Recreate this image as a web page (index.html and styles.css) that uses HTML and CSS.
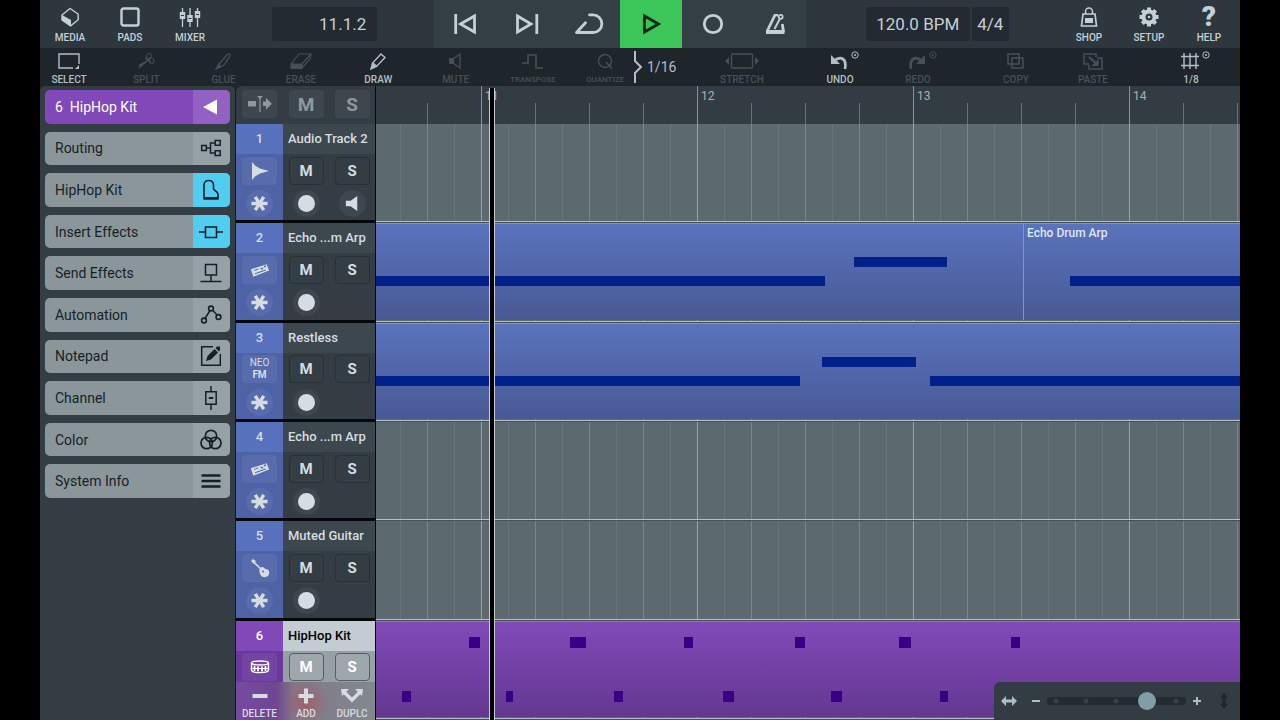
FILE: index.html
```html
<!DOCTYPE html>
<html lang="en">
<head>
    <meta charset="UTF-8">
    <meta name="viewport" content="width=device-width, initial-scale=1.0">
    <title>HipHop Kit - Arranger</title>
    <link rel="stylesheet" href="styles.css">
</head>
<body>
    <!-- Shared icons -->
    <svg class="defs" aria-hidden="true">
        <symbol id="star" viewBox="0 0 20 20"><path d="M1.500 10h17M5.500 3l9 14M14.500 3l-9 14" stroke="currentColor" stroke-width="3.600"/></symbol>
        <symbol id="device" viewBox="0 0 24 20"><path d="M1 9L20 3l3 7.500L4 18z" fill="currentColor"/><path d="M5 10.500l5-1.800M6 14.500l13-4.500" fill="none" stroke="#5369af" stroke-width="1.200"/><path d="M12 8l3 2 1-3z" fill="#5369af"/><path d="M17 6l2-.6" stroke="#5369af" stroke-width="2"/></symbol>
        <symbol id="target" viewBox="0 0 8 8"><circle cx="4" cy="4" r="3.200" fill="none" stroke="currentColor"/><circle cx="4" cy="4" r="1" fill="currentColor"/></symbol>
    </svg>

    <div class="app">
        <header class="topbar">
            <nav class="top-group left">
                <button class="top-btn"><svg viewBox="0 0 20 20"><path d="M10 1.500L18.200 7v5.800L10.500 19 2 13V8z" fill="none" stroke="currentColor" stroke-width="1.400" stroke-linejoin="round"/><path d="M2 8l9 5v6L2 13.500z" fill="currentColor"/></svg>MEDIA</button>
                <button class="top-btn"><svg viewBox="0 0 20 20"><rect x="1.500" y="1.500" width="17" height="17" rx="2" fill="none" stroke="currentColor" stroke-width="2.400"/></svg>PADS</button>
                <button class="top-btn"><svg viewBox="0 0 22 20"><path d="M3.500 1v19M11 1v19M18.500 1v19" stroke="currentColor" stroke-width="1.300"/><path d="M.8 5h5.400v7H.8zM8.300 8h5.400v7H8.300zM15.800 4h5.400v7h-5.400z" fill="currentColor"/><path d="M2 8.500h3M9.500 11.500h3M17 7.500h3" stroke="#2e363d"/></svg>MIXER</button>
            </nav>
            <output class="display position">11.1.2</output>
            <div class="transport">
                <button aria-label="Previous"><svg viewBox="0 0 30 30"><path d="M5.700 5v20M24.500 7v16L10.500 15z" fill="none" stroke="currentColor" stroke-width="2.800"/></svg></button>
                <button aria-label="Next"><svg viewBox="0 0 30 30"><path d="M24.800 5v20M5.500 7v16L19 15z" fill="none" stroke="currentColor" stroke-width="2.800"/></svg></button>
                <button aria-label="Loop"><svg viewBox="0 0 30 30"><path d="M11.500 13.700L2.500 23.500H19a8.800 8.800 0 0 0 0-17.700h-3.500" fill="none" stroke="currentColor" stroke-width="2.800" stroke-linecap="round" stroke-linejoin="round"/></svg></button>
                <button class="play" aria-label="Play"><svg viewBox="0 0 30 30"><path d="M8.500 7v16l14-8z" fill="none" stroke="currentColor" stroke-width="2.800"/></svg></button>
                <button aria-label="Record"><svg viewBox="0 0 30 30"><circle cx="15" cy="15" r="8.700" fill="none" stroke="currentColor" stroke-width="2.800"/></svg></button>
                <button aria-label="Metronome"><svg viewBox="0 0 30 30"><path d="M15 6L7 22.500M22.300 15L23.500 23" fill="none" stroke="currentColor" stroke-width="2.800"/><path d="M14 6.200h4" stroke="currentColor" stroke-width="2.400"/><path d="M6 23h18.500" stroke="currentColor" stroke-width="4"/><path d="M14.500 20l5.500-10.500" stroke="currentColor" stroke-width="2"/><circle cx="20.700" cy="7.800" r="2" fill="none" stroke="currentColor" stroke-width="1.700"/></svg></button>
            </div>
            <div class="tempo">
                <button class="display bpm">120.0 BPM</button>
                <button class="display">4/4</button>
            </div>
            <nav class="top-group right">
                <button class="top-btn"><svg viewBox="0 0 20 20"><path d="M4 7h12l1.500 12h-15z" fill="none" stroke="currentColor" stroke-width="1.700"/><path d="M6.500 7V4.500a3.500 3.500 0 0 1 7 0V7" fill="none" stroke="currentColor" stroke-width="1.500"/><path d="M6 11h8v5H6z" fill="currentColor"/></svg>SHOP</button>
                <button class="top-btn"><svg viewBox="0 0 20 20"><circle cx="10" cy="10" r="5.500" fill="none" stroke="currentColor" stroke-width="4"/><circle cx="10" cy="10" r="1.300" fill="currentColor"/><path d="M10 .5v4M10 15.500v4M.5 10h4M15.500 10h4M3.300 3.300L6 6M14 14l2.700 2.700M3.300 16.700L6 14M14 6l2.700-2.700" stroke="currentColor" stroke-width="4"/></svg>SETUP</button>
                <button class="top-btn"><span class="question">?</span>HELP</button>
            </nav>
        </header>

        <div class="toolbar">
            <div class="tools edit">
                <button class="tool"><svg viewBox="0 0 30 18"><path d="M25 12V2H5v14h14" fill="none" stroke="currentColor" stroke-width="1.400"/><path d="M25 13v4h-4z" fill="currentColor"/></svg>SELECT</button>
                <button class="tool" disabled><svg viewBox="0 0 30 18"><path d="M8 16L19 6M8 13.500L15 10M20 10l-6-4" fill="none" stroke="currentColor" stroke-width="1.500"/><circle cx="18" cy="4" r="2.500" fill="none" stroke="currentColor"/><circle cx="20.500" cy="9" r="2.500" fill="none" stroke="currentColor"/></svg>SPLIT</button>
                <button class="tool" disabled><svg viewBox="0 0 30 18"><path d="M7 17l3-5 8-9c2-2 4-1 3 1l-6 9-4 2z" fill="none" stroke="currentColor" stroke-width="1.300"/><path d="M7 17l3-5 3 3z" fill="currentColor"/></svg>GLUE</button>
                <button class="tool" disabled><svg viewBox="0 0 30 18"><path d="M5 12L13 2h12l-1 5-8 9H5zM5 12h11l8-9" fill="none" stroke="currentColor" stroke-width="1.200"/><path d="M5 12h12l-1 5H5z" fill="currentColor"/></svg>ERASE</button>
                <button class="tool"><svg viewBox="0 0 30 18"><path d="M8 17l1.500-6L18 2l4 3.500-8.500 9zM10 11l3.500 3" fill="none" stroke="currentColor" stroke-width="1.400"/><path d="M8 17l1.500-6 4 3.500z" fill="currentColor"/></svg>DRAW</button>
                <button class="tool" disabled><svg viewBox="0 0 30 18"><path d="M8 6h5v6H8z" fill="currentColor"/><path d="M12 7l7-5v14l-7-5" fill="none" stroke="currentColor" stroke-width="1.300"/></svg>MUTE</button>
                <button class="tool small" disabled><svg viewBox="0 0 30 18"><path d="M4 11h6V3h8v13h7" fill="none" stroke="currentColor" stroke-width="1.600"/></svg>TRANSPOSE</button>
            </div>
            <div class="tools quant">
                <button class="tool small" disabled><svg viewBox="0 0 30 18"><circle cx="15" cy="9" r="6.500" fill="none" stroke="currentColor" stroke-width="1.400"/><path d="M16 10l6 6.500" stroke="currentColor" stroke-width="1.600"/></svg>QUANTIZE</button>
                <button class="grid-value"><svg viewBox="0 0 12 34"><path d="M1 1v10l6 6-6 6v10" fill="none" stroke="currentColor" stroke-width="2"/></svg>1/16</button>
            </div>
            <div class="tools stretch">
                <button class="tool" disabled><svg class="wide" viewBox="0 0 36 18"><rect x="7.500" y="2" width="21" height="14" rx="1" fill="none" stroke="currentColor" stroke-width="1.400"/><path d="M5 5v8L1 9zM31 5v8l4-4z" fill="currentColor"/></svg>STRETCH</button>
            </div>
            <div class="tools history">
                <button class="tool marked"><svg viewBox="0 0 30 18"><path d="M9 9c7-6 13-2 11 8" fill="none" stroke="currentColor" stroke-width="2.800"/><path d="M6 3v9h9z" fill="currentColor"/></svg><svg class="mark"><use href="#target"/></svg>UNDO</button>
                <button class="tool marked" disabled><svg viewBox="0 0 30 18"><path d="M19 9C12 3 6 7 8 17" fill="none" stroke="currentColor" stroke-width="2.800"/><path d="M22 3v9h-9z" fill="currentColor"/></svg><svg class="mark"><use href="#target"/></svg>REDO</button>
            </div>
            <div class="tools clipboard">
                <button class="tool" disabled><svg viewBox="0 0 30 18"><path d="M7 2h11v10H7zM11 6h11v10H11z" fill="none" stroke="currentColor" stroke-width="1.500"/></svg>COPY</button>
                <button class="tool" disabled><svg viewBox="0 0 30 18"><path d="M11 12H6V2h12v3M19 6h5v11H11v-4" fill="none" stroke="currentColor" stroke-width="1.500"/><path d="M11 5l8 7" stroke="currentColor" stroke-width="2"/><path d="M20.500 7v7h-7z" fill="currentColor"/></svg>PASTE</button>
            </div>
            <div class="tools snap">
                <button class="tool marked"><svg viewBox="0 0 30 18"><path d="M8 1v16M14 1v16M20 1v16M5 4.500h18M5 13.500h18" stroke="currentColor" stroke-width="1.400"/></svg><svg class="mark"><use href="#target"/></svg>1/8</button>
            </div>
        </div>

        <main class="workspace">
            <aside class="inspector">
                <div class="inspector-list">
                    <button class="item current"><span>6&nbsp; HipHop Kit</span><i><svg viewBox="0 0 24 24"><path d="M18 4.500v15L4 12z" fill="#fff"/></svg></i></button>
                    <button class="item"><span>Routing</span><i><svg viewBox="0 0 24 24"><path d="M2.700 9.500h4.600v5H2.700zM16.200 4.500h5v4.800h-5zM16.200 14.700h5v4.800h-5zM7.500 12h4M16 7h-4.500v10H16" fill="none" stroke="currentColor" stroke-width="1.500"/></svg></i></button>
                    <button class="item"><span>HipHop Kit</span><i class="on"><svg viewBox="0 0 24 24"><path d="M5 20V7c0-6 9.500-6 9.500 0v3.500c0 2.500 4.500 2 4.500 6V20z" fill="none" stroke="currentColor" stroke-width="1.600"/><path d="M4.500 20.500h15" stroke="currentColor" stroke-width="2.600"/></svg></i></button>
                    <button class="item"><span>Insert Effects</span><i class="on"><svg viewBox="0 0 24 24"><path d="M6.500 7h11v10.500h-11zM0 12h6.500M17.500 12H24" fill="none" stroke="currentColor" stroke-width="1.600"/></svg></i></button>
                    <button class="item"><span>Send Effects</span><i><svg viewBox="0 0 24 24"><path d="M6.500 3.500h11v10.500h-11zM12 14v6M1.500 20.500h21" fill="none" stroke="currentColor" stroke-width="1.500"/></svg></i></button>
                    <button class="item"><span>Automation</span><i><svg viewBox="0 0 24 24"><path d="M6 15.500l5-8M14 7.500l4 4.500" stroke="currentColor" stroke-width="1.500"/><g fill="none" stroke="currentColor" stroke-width="1.600"><circle cx="5" cy="17.500" r="2.400"/><circle cx="12" cy="5.500" r="2.400"/><circle cx="19.500" cy="14" r="2.400"/></g></svg></i></button>
                    <button class="item"><span>Notepad</span><i><svg viewBox="0 0 24 24"><path d="M14 2.700H2.700v18.600h18.600V10" fill="none" stroke="currentColor" stroke-width="1.500"/><path d="M7 17l1.500-5 7-7 3.500 3.500-7 7zM16.500 4l1.500-1.500h3v3.500L20 7.500z" fill="currentColor"/></svg></i></button>
                    <button class="item"><span>Channel</span><i><svg viewBox="0 0 24 24"><path d="M6.800 5.700h10.400v12.600H6.800zM12 0v5.500M12 18.500V24" fill="none" stroke="currentColor" stroke-width="1.500"/><path d="M9.800 12h4.400" stroke="currentColor" stroke-width="2"/></svg></i></button>
                    <button class="item"><span>Color</span><i><svg viewBox="0 0 24 24" fill="none" stroke="currentColor" stroke-width="1.700"><circle cx="12" cy="8" r="5.700"/><circle cx="7.700" cy="15" r="5.700"/><circle cx="16.300" cy="15" r="5.700"/></svg></i></button>
                    <button class="item"><span>System Info</span><i><svg viewBox="0 0 24 24"><path d="M2.500 6.500h19M2.500 12h19M2.500 17.500h19" stroke="currentColor" stroke-width="2.400"/></svg></i></button>
                </div>
            </aside>

            <section class="tracks">
                <div class="track-tools">
                    <button aria-label="Follow playhead"><svg viewBox="0 0 24 20"><path d="M0 7h8v5.500H0zM15 7.500h3V4l6 5.700-6 5.800V12h-3z" fill="currentColor"/><path d="M9 2h6l-3 3z" fill="currentColor"/><path d="M12 3v15" stroke="currentColor" stroke-width="1.200"/></svg></button>
                    <button>M</button>
                    <button>S</button>
                </div>
                <div class="track">
                    <div class="number">1</div><div class="name">Audio Track 2</div>
                    <div class="cell tint"><button class="tile" aria-label="Audio"><svg viewBox="0 0 20 20"><path d="M2 1l3 3.500 5 3L19 10l-9 2.500-5 3L2 19z" fill="currentColor"/></svg></button></div>
                    <div class="cell"><button class="ms">M</button></div><div class="cell"><button class="ms">S</button></div>
                    <div class="cell tint"><button class="round" aria-label="Freeze"><svg viewBox="0 0 20 20"><use href="#star"/></svg></button></div>
                    <div class="cell"><button class="round rec" aria-label="Arm"></button></div>
                    <div class="cell"><button class="round" aria-label="Monitor"><svg viewBox="0 0 20 20"><path d="M3 7h5l7-5v16l-7-5H3z" fill="currentColor"/></svg></button></div>
                </div>
                <div class="track">
                    <div class="number">2</div><div class="name">Echo ...m Arp</div>
                    <div class="cell tint"><button class="tile" aria-label="Instrument"><svg viewBox="0 0 20 20"><use href="#device"/></svg></button></div>
                    <div class="cell"><button class="ms">M</button></div><div class="cell"><button class="ms">S</button></div>
                    <div class="cell tint"><button class="round" aria-label="Freeze"><svg viewBox="0 0 20 20"><use href="#star"/></svg></button></div>
                    <div class="cell"><button class="round rec" aria-label="Arm"></button></div><div class="cell"></div>
                </div>
                <div class="track">
                    <div class="number">3</div><div class="name">Restless</div>
                    <div class="cell tint"><button class="tile neo">NEO<b>FM</b></button></div>
                    <div class="cell"><button class="ms">M</button></div><div class="cell"><button class="ms">S</button></div>
                    <div class="cell tint"><button class="round" aria-label="Freeze"><svg viewBox="0 0 20 20"><use href="#star"/></svg></button></div>
                    <div class="cell"><button class="round rec" aria-label="Arm"></button></div><div class="cell"></div>
                </div>
                <div class="track">
                    <div class="number">4</div><div class="name">Echo ...m Arp</div>
                    <div class="cell tint"><button class="tile" aria-label="Instrument"><svg viewBox="0 0 20 20"><use href="#device"/></svg></button></div>
                    <div class="cell"><button class="ms">M</button></div><div class="cell"><button class="ms">S</button></div>
                    <div class="cell tint"><button class="round" aria-label="Freeze"><svg viewBox="0 0 20 20"><use href="#star"/></svg></button></div>
                    <div class="cell"><button class="round rec" aria-label="Arm"></button></div><div class="cell"></div>
                </div>
                <div class="track">
                    <div class="number">5</div><div class="name">Muted Guitar</div>
                    <div class="cell tint"><button class="tile" aria-label="Guitar"><svg viewBox="0 0 20 20"><path d="M3 3.500l9 8.500" stroke="currentColor" stroke-width="1.700"/><path d="M1 3l2-2 3 2-2 3zM9.500 13c-1-3 3-5 4-3.500l2 1.500c5 0 5 7 0 8-4 1-6-3-6-6z" fill="currentColor"/><circle cx="13" cy="13.500" r="1" fill="#5369af"/></svg></button></div>
                    <div class="cell"><button class="ms">M</button></div><div class="cell"><button class="ms">S</button></div>
                    <div class="cell tint"><button class="round" aria-label="Freeze"><svg viewBox="0 0 20 20"><use href="#star"/></svg></button></div>
                    <div class="cell"><button class="round rec" aria-label="Arm"></button></div><div class="cell"></div>
                </div>
                <div class="track selected">
                    <div class="number">6</div><div class="name">HipHop Kit</div>
                    <div class="cell tint"><button class="tile" aria-label="Drums"><svg viewBox="0 0 20 20"><ellipse cx="10" cy="6" rx="8.500" ry="2" fill="none" stroke="#fff" stroke-width="1.400"/><path d="M1.500 6v7c0 3.500 17 3.500 17 0V6" fill="none" stroke="#fff" stroke-width="1.400"/><path d="M4.500 9v5M8 9.500v5M12 9.500v5M15.500 9v5" stroke="#fff" stroke-width="1.800"/><path d="M2 11.500h16" stroke="#fff"/></svg></button></div>
                    <div class="cell"><button class="ms">M</button></div><div class="cell"><button class="ms">S</button></div>
                    <div class="cell tint"></div><div class="cell"></div><div class="cell"></div>
                </div>
                <div class="track-actions">
                    <button><svg viewBox="0 0 24 18"><path d="M4.500 9h15" stroke="currentColor" stroke-width="4"/></svg>DELETE</button>
                    <button><svg viewBox="0 0 24 18"><path d="M4.500 9h15M12 1.500v15" stroke="currentColor" stroke-width="4"/></svg>ADD</button>
                    <button><svg viewBox="0 0 24 18"><path d="M4 5l8 8 8-8" fill="none" stroke="currentColor" stroke-width="3.400"/><path d="M1 2h8l-7 7zM23 2h-8l7 7z" fill="currentColor"/></svg>DUPLC</button>
                </div>
            </section>

            <section class="timeline">
                <div class="ruler"><span>11</span><span>12</span><span>13</span><span>14</span></div>
                <div class="lane"></div>
                <div class="lane">
                    <div class="clip first">
                        <b class="note low" style="left: 0px; width: 449px"></b>
                        <b class="note high" style="left: 478px; width: 93px"></b>
                    </div>
                    <div class="clip">
                        <span>Echo Drum Arp</span>
                        <b class="note low" style="left: 46px; width: 170px"></b>
                    </div>
                </div>
                <div class="lane">
                    <div class="clip">
                        <b class="note low" style="left: 0px; width: 424px"></b>
                        <b class="note high" style="left: 446px; width: 94px"></b>
                        <b class="note low" style="left: 554px; width: 310px"></b>
                    </div>
                </div>
                <div class="lane"></div>
                <div class="lane"></div>
                <div class="lane">
                    <div class="clip drums">
                        <b class="hit high" style="left: 93px; width: 11px"></b>
                        <b class="hit high" style="left: 194px; width: 16px"></b>
                        <b class="hit high" style="left: 308px; width: 9px"></b>
                        <b class="hit high" style="left: 419px; width: 10px"></b>
                        <b class="hit high" style="left: 523px; width: 12px"></b>
                        <b class="hit high" style="left: 635px; width: 9px"></b>
                        <b class="hit low" style="left: 26px; width: 9px"></b>
                        <b class="hit low" style="left: 130px; width: 7px"></b>
                        <b class="hit low" style="left: 238px; width: 9px"></b>
                        <b class="hit low" style="left: 347px; width: 11px"></b>
                        <b class="hit low" style="left: 455px; width: 11px"></b>
                        <b class="hit low" style="left: 564px; width: 8px"></b>
                    </div>
                </div>
                <div class="playhead"></div>
                <div class="zoom">
                    <svg class="fit" viewBox="0 0 16 12"><path d="M0 6l5-5v3.500h6V1l5 5-5 5V7.500H5V11z" fill="currentColor"/></svg>
                    <button aria-label="Zoom out"><svg viewBox="0 0 8 8"><path d="M0 4h8" stroke="currentColor" stroke-width="2"/></svg></button>
                    <input type="range" min="0" max="4" value="3" aria-label="Zoom">
                    <button aria-label="Zoom in"><svg viewBox="0 0 8 8"><path d="M0 4h8M4 0v8" stroke="currentColor" stroke-width="2"/></svg></button>
                    <svg class="height" viewBox="0 0 10 16"><path d="M5 0l4 5H6.500v6H9l-4 5-4-5h2.500V5H1z" fill="currentColor"/></svg>
                </div>
            </section>
        </main>
    </div>
</body>
</html>
```
FILE: styles.css
```css
* {
    box-sizing: border-box;
}

body {
    margin: 0;
    background: #000;
    color: #c3d0d6;
    font-family: Roboto, "Liberation Sans", sans-serif;
}

button {
    margin: 0;
    padding: 0;
    border: 0;
    background: none;
    color: inherit;
    font: inherit;
    cursor: pointer;
}

svg {
    display: block;
}

.defs {
    position: absolute;
    width: 0;
    height: 0;
}

.app {
    display: flex;
    flex-direction: column;
    min-height: 100vh;
    margin: 0 40px;
    background: #1e252b;
}

/* Top bar */
.topbar {
    display: grid;
    grid-template-columns: 180px 52fr 105px 57fr 372px 59fr 143px 50fr 180px 1fr;
    align-items: center;
    height: 48px;
    background: #2e373e;
}

.position { grid-column: 3; }
.transport { grid-column: 5; }
.tempo { grid-column: 7; }
.right { grid-column: 9; }

.top-group {
    display: flex;
    height: 48px;
}

.top-btn {
    display: flex;
    flex: 1;
    flex-direction: column;
    align-items: center;
    gap: 5px;
    padding-top: 7px;
    font-size: 10px;
    font-weight: 500;
    line-height: 12px;
}

.top-btn svg {
    width: 22px;
    height: 20px;
}

.question {
    height: 20px;
    font-size: 28px;
    font-weight: 900;
    line-height: 20px;
}

.display {
    height: 34px;
    padding: 0 11px;
    border-radius: 3px;
    background: #232a31;
    font-size: 17px;
    line-height: 34px;
    text-align: right;
}

.transport {
    display: flex;
    height: 48px;
    background: #343e45;
}

.transport button {
    display: grid;
    flex: 1;
    place-items: center;
}

.transport svg {
    width: 30px;
    height: 30px;
}

.transport .play {
    background: #3cc558;
    color: #10280f;
}

.tempo {
    display: flex;
    gap: 2px;
}

.tempo .display {
    flex: 1;
    padding: 0;
    text-align: center;
}

.tempo .bpm {
    flex: 0 0 104px;
}

/* Tool bar */
.toolbar {
    display: grid;
    grid-template-columns: 522fr 14fr 104fr 33fr 58fr 40fr 136fr 40fr 135fr 40fr 58fr 20fr;
    height: 38px;
    color: #b3bfc5;
}

.quant { grid-column: 3; }
.stretch { grid-column: 5; }
.history { grid-column: 7; }
.clipboard { grid-column: 9; }
.snap { grid-column: 11; }

.tools {
    display: flex;
    justify-content: space-between;
}

.tool {
    display: flex;
    position: relative;
    flex: 0 0 58px;
    flex-direction: column;
    align-items: center;
    gap: 4px;
    padding-top: 4px;
    font-size: 10px;
    font-weight: 500;
    line-height: 12px;
}

.tool svg {
    width: 30px;
    height: 18px;
}

.tool .wide {
    width: 36px;
}

.tool:disabled {
    color: #485057;
}

.small {
    font-size: 8px;
}

.marked .mark {
    position: absolute;
    top: 3px;
    right: 10px;
    width: 8px;
    height: 8px;
}

.grid-value {
    display: flex;
    flex: 1;
    align-items: center;
    gap: 1px;
    font-size: 14px;
}

.grid-value svg {
    width: 12px;
    height: 34px;
}

/* Workspace */
.workspace {
    display: grid;
    flex: 1;
    grid-template-columns: 195px 141px 1fr;
}

.inspector {
    padding: 4px 5px 0;
    border-radius: 5px 5px 0 0;
    background: #343d44;
}

.inspector-list {
    display: grid;
    grid-auto-rows: 1fr;
    gap: 8px;
    height: 408px;
}

.item {
    display: flex;
    align-items: stretch;
    overflow: hidden;
    border-radius: 5px;
    background: #8b969b;
    color: #171f26;
    font-size: 14px;
    text-align: left;
}

.item span {
    flex: 1;
    align-self: center;
    padding-left: 10px;
}

.item i {
    display: grid;
    flex: 0 0 37px;
    place-items: center;
    padding-right: 1px;
    background: #96a1a6;
}

.item svg {
    width: 24px;
    height: 24px;
}

.item .on {
    background: #50cdf0;
}

.current {
    background: #8048b8;
    color: #fff;
}

.current i {
    background: #9360c4;
}

/* Track list */
.tracks {
    display: grid;
    position: relative;
    grid-template-rows: 38px repeat(6, 1fr);
    border-right: 1px solid #05080a;
    border-left: 1px solid #14191d;
    border-top-left-radius: 6px;
    background: #343d44;
}

.track-tools {
    display: grid;
    grid-template-columns: 47px 1fr 1fr;
    place-items: center;
    padding-bottom: 2px;
}

.track-tools button {
    display: grid;
    place-items: center;
    width: 35px;
    height: 28px;
    border-radius: 4px;
    background: #3e474e;
    color: #8e989d;
    font-size: 19px;
    font-weight: 700;
}

.track-tools svg {
    width: 24px;
    height: 20px;
}

.track {
    display: grid;
    grid-template-columns: 47px 1fr 1fr;
    grid-template-rows: 30px 33px 1fr;
    border-bottom: 3px solid #05080b;
    color: #d5dde0;
}

.number {
    background: #5871bd;
    font-size: 13px;
    font-weight: 500;
    line-height: 30px;
    text-align: center;
}

.name {
    grid-column: span 2;
    padding-left: 5px;
    background: #3d474e;
    font-size: 13px;
    font-weight: 500;
    line-height: 30px;
    white-space: nowrap;
}

.cell {
    display: grid;
    place-items: center;
}

.tint {
    background: #4e63a6;
}

.tile {
    display: grid;
    place-items: center;
    align-content: center;
    width: 35px;
    height: 28px;
    border-radius: 4px;
    background: #576bad;
}

.tile svg {
    width: 22px;
    height: 20px;
}

.neo {
    font-size: 10px;
    line-height: 12px;
}

.ms {
    width: 35px;
    height: 28px;
    border: 1px solid #282f35;
    border-radius: 4px;
    background: #343d44;
    font-size: 15px;
    font-weight: 700;
}

.round {
    display: grid;
    place-items: center;
    width: 27px;
    height: 27px;
    border-radius: 50%;
    background: #3e474d;
}

.tint .round {
    background: #576bad;
}

.round svg {
    width: 19px;
    height: 19px;
}

.rec::before {
    width: 17px;
    height: 17px;
    border-radius: 50%;
    background: #d5dde0;
    content: "";
}

.selected {
    border-bottom: 0;
    background: #96a0a5;
    color: #fff;
}

.selected .number {
    background: #8048b8;
}

.selected .name {
    background: #c3cdd1;
    color: #000;
}

.selected .tint {
    background: #693a9b;
}

.selected .tile {
    background: #7344a3;
}

.selected .ms {
    border-color: #555e63;
    background: #9ea8ac;
}

/* Sits over the bottom of the last track */
.track-actions {
    display: grid;
    position: absolute;
    right: 0;
    bottom: 0;
    left: 0;
    grid-template-columns: 47px 1fr 1fr;
    height: 38px;
    background: radial-gradient(circle at 70px 20px, #a1606d, transparent 22px), linear-gradient(90deg, #774a9f, #6e4691 40px, #827887 58px, #81898e);
}

.track-actions button {
    display: flex;
    flex-direction: column;
    align-items: center;
    gap: 2px;
    padding-top: 5px;
    color: #d5dde0;
    font-size: 10px;
    font-weight: 500;
    line-height: 14px;
}

.track-actions svg {
    width: 24px;
    height: 18px;
}

/* Timeline: a bar is 216px, a beat 54px */
.timeline {
    display: grid;
    position: relative;
    grid-template-rows: 38px repeat(6, 1fr);
    min-width: 0;
    overflow: hidden;
}

.ruler {
    display: flex;
    overflow: hidden;
    padding-left: 106px;
    background:
        linear-gradient(90deg, #879196 1px, transparent 1px) 105px 0 / 216px 100%,
        linear-gradient(90deg, #687278 1px, transparent 1px) 51px 100% / 54px 21px repeat-x,
        #343c43;
}

.ruler span {
    flex: 0 0 216px;
    padding: 3px 0 0 3px;
    color: #a7b1b6;
    font-size: 12px;
    line-height: 14px;
}

.lane {
    display: flex;
    min-width: 0;
    border-bottom: 1px solid #465055;
    background:
        linear-gradient(#b4bfc3, #b4bfc3) 0 100% / 100% 1px no-repeat,
        linear-gradient(90deg, #98a4a8 1px, transparent 1px) 105px 0 / 216px 100%,
        linear-gradient(90deg, #79878c 1px, transparent 1px) 51px 0 / 54px 100%,
        linear-gradient(90deg, #68777c 1px, transparent 1px) 24px 0 / 54px 100%,
        #5c6a70;
}

.clip {
    position: relative;
    flex: 1;
    overflow: hidden;
    margin-bottom: 2px;
    border-top: 1px solid #8090c4;
    background: linear-gradient(#5a73bd, #485995);
}

.first {
    flex: 0 0 647px;
}

.first + .clip {
    border-left: 1px solid #8a95b4;
}

.clip span {
    display: block;
    padding: 2px 3px;
    color: #dfe6f5;
    font-size: 12px;
    font-weight: 500;
    line-height: 14px;
}

.note {
    position: absolute;
    height: 10px;
    background: #00218a;
}

.note.low { top: 52px; }
.note.high { top: 33px; }

.drums {
    border-color: #9572b5;
    background: linear-gradient(#824ab9, #633890);
}

.hit {
    position: absolute;
    height: 11px;
    background: #380086;
}

.hit.high { top: 15px; }
.hit.low { top: 69px; }

.playhead {
    position: absolute;
    top: 2px;
    bottom: 0;
    left: 113px;
    width: 6px;
    border: solid #c5cccf;
    border-width: 0 1px;
    background: #000;
}

.zoom {
    display: flex;
    position: absolute;
    right: 0;
    bottom: 0;
    align-items: center;
    gap: 9px;
    width: 246px;
    height: 38px;
    padding-left: 7px;
    border-top-left-radius: 6px;
    background: #323c42;
    color: #abc0c6;
}

.zoom svg {
    width: 8px;
    height: 8px;
}

.zoom button {
    display: grid;
    flex: 0 0 14px;
    place-items: center;
    height: 20px;
}

.zoom .fit {
    width: 16px;
    height: 12px;
    margin-right: 3px;
}

.zoom .height {
    width: 10px;
    height: 16px;
    margin-left: 6px;
    color: #1f272c;
}

.zoom input {
    flex: 0 0 139px;
    width: 139px;
    height: 18px;
    margin: 0 -5px;
    appearance: none;
    background: none;
}

.zoom input::-webkit-slider-runnable-track {
    height: 8px;
    border-radius: 3px;
    background: radial-gradient(circle, #374047 2px, transparent 3px) -6px 0 / 30px 8px, #232a30;
}

.zoom input::-webkit-slider-thumb {
    width: 18px;
    height: 18px;
    margin-top: -5px;
    border-radius: 50%;
    appearance: none;
    background: #7f9ea5;
}
```
